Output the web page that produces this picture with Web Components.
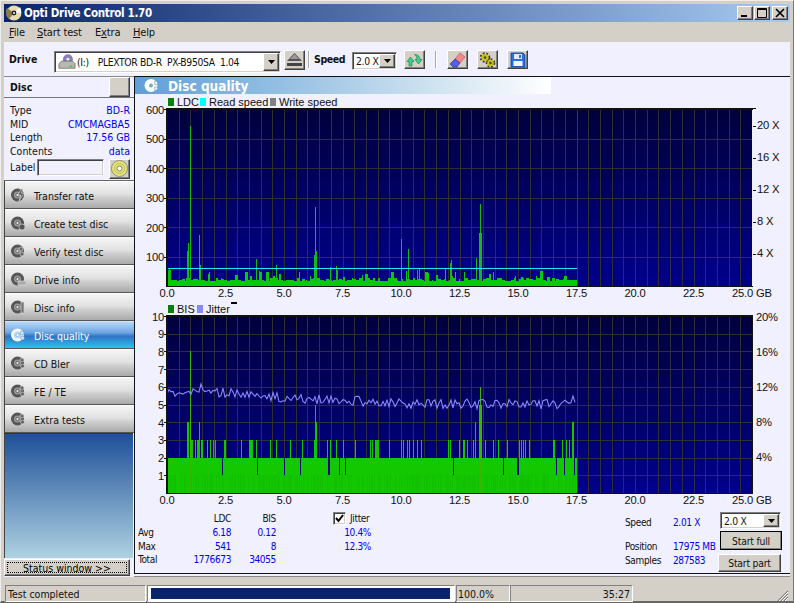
<!DOCTYPE html>
<html><head><meta charset="utf-8"><title>Opti Drive Control</title>
<style>
html,body{margin:0;padding:0;width:794px;height:603px;overflow:hidden;background:#d4d0c8}
body{font-family:"DejaVu Sans",sans-serif;font-stretch:condensed;font-size:10.5px;color:#000}
</style></head><body>
<odc-window>
  <odc-titlebar>Opti Drive Control 1.70</odc-titlebar>
  <odc-menubar></odc-menubar>
  <odc-toolbar></odc-toolbar>
  <odc-workspace>
    <odc-sidebar slot="side"></odc-sidebar>
    <odc-main slot="main"></odc-main>
  </odc-workspace>
  <odc-statusbar></odc-statusbar>
</odc-window>
<script>
const UI='"DejaVu Sans",sans-serif';
const BEVEL='border:1px solid;border-color:#fff #404040 #404040 #fff;box-shadow:inset -1px -1px 0 #808080;background:#d4d0c8;box-sizing:border-box;';
const SUNK='border:1px solid;border-color:#808080 #fff #fff #808080;box-shadow:inset 1px 1px 0 #404040,inset -1px -1px 0 #d4d0c8;box-sizing:border-box;';
function comp(name,css,html,init){
  class C extends HTMLElement{
    constructor(){super();this.attachShadow({mode:'open'}).innerHTML='<style>'+css+'</style>'+html;}
    connectedCallback(){if(init&&!this._i){this._i=1;init.call(this,this.shadowRoot);}}
  }
  customElements.define(name,C);
}
const navDisc=(extra,fg)=>`<svg width="16" height="16" viewBox="0 0 16 16"><circle cx="7.5" cy="8" r="6.5" fill="${fg||'#555'}"/><circle cx="7.5" cy="8" r="3.6" fill="${fg?'#bcd8f4':'#9a9a9a'}"/><circle cx="7.5" cy="8" r="1.6" fill="${fg?'#fff':'#e8e8e8'}" stroke="${fg?'#6aa':'#333'}" stroke-width=".6"/>${extra||''}</svg>`;

comp('odc-window',`:host{display:flex;flex-direction:column;width:794px;height:603px;box-sizing:border-box;background:#d4d0c8;border-top:1px solid #f0eee8;border-bottom:2px solid #666;border-right:1px solid #777;border-left:1px solid #eee;padding:3px 3px 1px}`,`<slot></slot>`);

comp('odc-titlebar',`:host{display:flex;align-items:center;height:18px;flex:none;background:linear-gradient(90deg,#0a246a,#a6caf0);color:#fff;font:bold 11.5px ${UI};font-stretch:condensed;letter-spacing:-.3px;padding-left:2px}
.t{margin-left:2px;white-space:nowrap}.b{margin-left:auto;display:flex;margin-right:2px}
.w{width:16px;height:14px;${BEVEL}display:flex;align-items:center;justify-content:center}.w+.w{margin-left:1px}.w.c{margin-left:2px}`,
`<svg width="16" height="16" viewBox="0 0 16 16"><circle cx="8" cy="8" r="7.5" fill="#e6dcb0"/><path d="M8 8L1 3A8 8 0 0 0 3 14Z" fill="#8a7a50"/><path d="M8 8L14 2A8 8 0 0 1 15 8Z" fill="#fff"/><circle cx="8" cy="8" r="2.4" fill="#222"/><circle cx="8" cy="8" r="1" fill="#fff"/></svg>
<span class="t"><slot></slot></span>
<span class="b"><span class="w"><svg width="10" height="10"><rect x="1" y="7" width="6" height="2"/></svg></span><span class="w"><svg width="12" height="10"><path d="M1.5 .5h9v9h-9z M1 1.5h10" fill="none" stroke="#000"/></svg></span><span class="w c"><svg width="10" height="10"><path d="M1 1L9 9M9 1L1 9" stroke="#000" stroke-width="1.7"/></svg></span></span>`);

comp('odc-menubar',`:host{display:flex;height:20px;flex:none;align-items:center;font:11px ${UI};font-stretch:condensed;letter-spacing:-.15px;padding-left:5px;background:#d4d0c8;color:#111}
span{display:block}u{text-decoration:underline}`,
`<span style="width:28px"><u>F</u>ile</span><span style="width:58px"><u>S</u>tart test</span><span style="width:38px">E<u>x</u>tra</span><span><u>H</u>elp</span>`);

comp('odc-combo',`:host{display:flex;align-items:center;box-sizing:border-box;${SUNK}background:#fff;height:var(--h,18px);font:10.3px ${UI};font-stretch:condensed;letter-spacing:var(--ls,-.27px);color:#111;overflow:hidden;position:relative;padding-left:3px;white-space:nowrap}
.a{margin-left:auto;width:16px;height:calc(100% - 2px);margin-right:1px;${BEVEL}display:flex;align-items:center;justify-content:center;flex:none}`,
`<slot></slot><span class="a"><svg width="7" height="4"><path d="M0 0h7L3.500 4z"/></svg></span>`);

comp('odc-toolbtn',`:host{display:flex;align-items:center;justify-content:center;width:21px;height:19px;flex:none;${BEVEL}}`,`<slot></slot>`);

comp('odc-btn',`:host{display:flex;align-items:center;justify-content:center;${BEVEL}font:10.3px ${UI};font-stretch:condensed;letter-spacing:-.2px;color:#111;flex:none}`,`<slot></slot>`);

comp('odc-toolbar',`:host{display:flex;align-items:flex-start;height:34px;flex:none;background:#f0f0ff;box-sizing:border-box;padding-left:5px;position:relative}
b{font:bold 10.5px ${UI};font-stretch:condensed;color:#111}
.sep{width:1px;height:17px;background:#aaa;margin-top:9px;border-right:1px solid #fff;flex:none}
.d{margin-top:11px}
odc-combo{margin-top:9px}odc-toolbtn{margin-top:8px}
svg{display:block}`,
`<b class="d" style="width:45px">Drive</b>
<odc-combo style="width:227px;--h:22px;--ls:-.35px"><svg width="18" height="18" viewBox="0 0 20 18" style="margin-right:1px;flex:none"><circle cx="11" cy="6" r="5.5" fill="#8a7fb8"/><circle cx="11" cy="6" r="1.700" fill="#eee"/><path d="M1 11l3-3h12l3 3v5H1z" fill="#b8b8b0" stroke="#555" stroke-width=".7"/><rect x="13" y="13" width="3" height="1.500" fill="#3c3"/></svg><span style="margin-right:9px">(I:)</span><span>PLEXTOR BD-R&nbsp; PX-B950SA&nbsp; 1.04</span></odc-combo>
<odc-toolbtn style="margin-left:3px;width:21px;height:20px"><svg width="17" height="14" viewBox="0 0 17 14"><path d="M8.500 0L16 8H1z" fill="#555"/><path d="M8.500 1L4 6h9z" fill="#999"/><rect x="1" y="10" width="15" height="3" fill="#444"/></svg></odc-toolbtn>
<span class="sep" style="margin-left:3px;margin-right:4px"></span>
<b class="d" style="width:38px;letter-spacing:-.4px">Speed</b>
<odc-combo style="width:45px;--h:18px;margin-top:10px">2.0 X</odc-combo>
<odc-toolbtn style="margin-left:7px"><svg width="17" height="16" viewBox="0 0 17 16"><path d="M4.500 5L1 9.500H3V14H6V9.500H8z" fill="#3cd088" stroke="#0d7a48" stroke-width=".6"/><path d="M12.500 12L16 7.500H14C14 4.500 12 2.500 8.500 2.500 10.500 4 11 5.500 11 7.500H9z" fill="#3cd088" stroke="#0d7a48" stroke-width=".6"/></svg></odc-toolbtn>
<span class="sep" style="margin-left:10px;margin-right:10px"></span>
<odc-toolbtn><svg width="17" height="16" viewBox="0 0 17 16"><path d="M11 1l5 4-5 6-5-4z" fill="#f08a8a" stroke="#b44" stroke-width=".6"/><path d="M6 7l5 4-3 4H4l-3-3z" fill="#5560e8" stroke="#228" stroke-width=".6"/></svg></odc-toolbtn>
<odc-toolbtn style="margin-left:9px"><svg width="17" height="16" viewBox="0 0 17 16"><g fill="none" stroke="#3a3a10" stroke-width="2" stroke-dasharray="1.800 1.700"><circle cx="6" cy="5.500" r="4.300"/><circle cx="11.500" cy="11" r="3.800"/></g><circle cx="6" cy="5.500" r="3.600" fill="#c8c018"/><circle cx="11.500" cy="11" r="3.200" fill="#c8c018"/><circle cx="6" cy="5.500" r="1.200" fill="#444"/><circle cx="11.500" cy="11" r="1.200" fill="#444"/></svg></odc-toolbtn>
<odc-toolbtn style="margin-left:9px"><svg width="16" height="16" viewBox="0 0 16 16"><path d="M1 1h12l2 2v12H1z" fill="#2a6fe0" stroke="#0a3a9a" stroke-width=".8"/><rect x="4" y="2" width="8" height="5" fill="#dfe8f8"/><rect x="9" y="3" width="2" height="3" fill="#2a6fe0"/><rect x="3.500" y="9" width="9" height="5" fill="#f4f4f4"/></svg></odc-toolbtn>`);

comp('odc-workspace',`:host{display:flex;flex:none;height:501px;background:#f0f0ff}
.s{width:130px;flex:none;display:block}.m{flex:1;min-width:0;display:block}`,
`<div class="s"><slot name="side"></slot></div><div class="m"><slot name="main"></slot></div>`);

comp('odc-row',`:host{display:flex;justify-content:space-between;height:13.700px;align-items:center;padding:0 0 0 6px;color:#111;font-size:10.5px}::slotted([slot=v]){color:#0000f0}`,`<slot></slot><slot name="v"></slot>`);

comp('odc-nav',`:host{display:flex;align-items:center;height:28px;box-sizing:border-box;border-bottom:1px solid #555;border-top:1px solid #fff;background:linear-gradient(#f4f4f4 0,#e2e2e2 45%,#cfcfcf 60%,#a9a9a9 100%);font:10.5px ${UI};font-stretch:condensed;color:#111;padding:1px 0 0 5px}
:host([active]){background:linear-gradient(#b6d8f8 0,#6fa8e4 40%,#2f74c4 55%,#2cc4f0 100%);color:#fff;border-top-color:#d0e8ff}
.i{width:24px;display:flex;height:16px;margin-top:-1px}`,`<span class="i"><slot name="i"></slot></span><slot></slot>`);

comp('odc-sidebar',`:host{display:flex;flex-direction:column;height:501px;box-sizing:border-box;border-top:1px solid #888}
.h{display:flex;align-items:center;height:21px;flex:none;box-sizing:border-box;border-bottom:1px solid #777;padding-left:6px;font:bold 10.5px ${UI};font-stretch:condensed;color:#111}
.sq{margin-left:auto;margin-right:4px;width:21px;height:20px;${BEVEL}}
.info{height:83px;flex:none;box-sizing:border-box;padding:5px 4px 0 0;border-bottom:1px solid #666}
.lab{display:flex;align-items:flex-start;padding-left:6px;height:20px;color:#111;margin-top:1px;line-height:16px}
.in{width:67px;height:17px;${SUNK}margin-left:auto;background:#f0f0ff}
.dbtn{width:21px;height:20px;${BEVEL}margin-left:5px;display:flex;align-items:center;justify-content:center}
.nav{display:block;flex:none;border-left:1px solid #444;width:129px}
.sky{height:124px;flex:none;width:128px;border-left:1px solid #444;border-top:1px solid #333;background:linear-gradient(#1f5099,#aed2e2)}
.st{margin-top:1px;width:126px;height:17px;display:flex;${BEVEL}position:relative;align-items:center;justify-content:center}
.st:after{content:"";position:absolute;inset:2px;border:1px dotted #000}`,
`<div class="h">Disc<span class="sq"></span></div>
<div class="info">
 <odc-row>Type<span slot="v">BD-R</span></odc-row>
 <odc-row>MID<span slot="v">CMCMAGBA5</span></odc-row>
 <odc-row>Length<span slot="v">17.56 GB</span></odc-row>
 <odc-row>Contents<span slot="v">data</span></odc-row>
 <div class="lab">Label<span class="in"></span><span class="dbtn"><svg width="17" height="17" viewBox="0 0 17 17"><circle cx="8.500" cy="8.500" r="8" fill="#e6e67a" stroke="#777" stroke-width=".8"/><circle cx="8.500" cy="8.500" r="5" fill="none" stroke="#b8b850"/><circle cx="8.500" cy="8.500" r="2.500" fill="#fff" stroke="#666" stroke-width=".8"/></svg></span></div>
</div>
<div class="nav">
 <odc-nav><span slot="i">${navDisc('<path d="M11 2l-3 6h3l-2 6 5-8h-3l2-4z" fill="#555" stroke="#eee" stroke-width=".6"/>')}</span>Transfer rate</odc-nav>
 <odc-nav><span slot="i">${navDisc('<circle cx="12" cy="12" r="3" fill="#555" stroke="#ddd" stroke-width=".6"/>')}</span>Create test disc</odc-nav>
 <odc-nav><span slot="i">${navDisc('<circle cx="11" cy="6" r="2" fill="#666" stroke="#ddd" stroke-width=".6"/><circle cx="12" cy="11" r="2" fill="#666" stroke="#ddd" stroke-width=".6"/>')}</span>Verify test disc</odc-nav>
 <odc-nav><span slot="i">${navDisc('<rect x="8" y="10" width="8" height="4" fill="#aaa" stroke="#ddd" stroke-width=".6"/>')}</span>Drive info</odc-nav>
 <odc-nav><span slot="i">${navDisc('<rect x="11" y="3" width="3" height="11" fill="#777" stroke="#ddd" stroke-width=".6"/>')}</span>Disc info</odc-nav>
 <odc-nav active><span slot="i">${navDisc('<circle cx="12" cy="6" r="2" fill="#cfe4fa" stroke="#68a" stroke-width=".5"/><circle cx="12.500" cy="11" r="2" fill="#cfe4fa" stroke="#68a" stroke-width=".5"/>','#f4f8ff')}</span>Disc quality</odc-nav>
 <odc-nav><span slot="i">${navDisc('<circle cx="12" cy="5" r="2" fill="#666" stroke="#ddd" stroke-width=".6"/><circle cx="12.500" cy="11" r="2" fill="#666" stroke="#ddd" stroke-width=".6"/>')}</span>CD Bler</odc-nav>
 <odc-nav><span slot="i">${navDisc('<circle cx="12" cy="5" r="2" fill="#666" stroke="#ddd" stroke-width=".6"/><circle cx="12.500" cy="11" r="2" fill="#666" stroke="#ddd" stroke-width=".6"/>')}</span>FE / TE</odc-nav>
 <odc-nav><span slot="i">${navDisc('<circle cx="12" cy="5" r="2" fill="#666" stroke="#ddd" stroke-width=".6"/><circle cx="12.500" cy="11" r="2" fill="#666" stroke="#ddd" stroke-width=".6"/>')}</span>Extra tests</odc-nav>
</div>
<div class="sky"></div>
<div class="st">Status window &gt;&gt;</div>`);

comp('odc-banner',`:host{display:flex;align-items:center;height:17px;width:416px;flex:none;background:linear-gradient(90deg,#5f9fd8,#9cc4e4 40%,#d4e6f2 75%,#fff);color:#fff;font:bold 13.5px ${UI};font-stretch:condensed}
.i{width:33px;display:flex;justify-content:center}`,
`<span class="i"><svg width="15" height="15" viewBox="0 0 15 15"><circle cx="7" cy="7.500" r="6.500" fill="#fff"/><circle cx="7" cy="7.500" r="2" fill="#7ab"/><circle cx="12" cy="5" r="1.800" fill="#e4f0fa" stroke="#68a" stroke-width=".5"/><circle cx="12" cy="10.500" r="1.800" fill="#e4f0fa" stroke="#68a" stroke-width=".5"/></svg></span><slot></slot>`);

comp('odc-legend',`:host{display:flex;align-items:center;box-sizing:border-box;padding-top:2px;height:var(--h,13px);padding-left:33px;font:11px "Liberation Sans",sans-serif;color:#111;white-space:nowrap}
::slotted(i){display:block;width:6px;height:8px;margin-right:3px;flex:none}`,`<slot></slot>`);

function rng(seed){let s=seed;return()=>{s=(s*1664525+1013904223)>>>0;return s/4294967296;};}
comp('odc-chart',`:host{display:block;width:655px;height:var(--ch,192px)}svg{display:block;overflow:visible}text{font:11.2px "Liberation Sans",sans-serif;letter-spacing:-.2px;fill:#111}`,`<svg id="s" width="655" xmlns="http://www.w3.org/2000/svg"></svg>`,function(root){
  const kind=this.getAttribute('kind');
  const svg=root.getElementById('s');
  svg.setAttribute('height',192);svg.setAttribute('shape-rendering','crispEdges');
  const L=32,R=617,T=1,B=178,W=R-L,Ht=B-T;
  const gid='g'+kind;
  const X=g=>L+g/25*W;
  let o=`<defs><linearGradient id="${gid}" x1="0" y1="0" x2="0" y2="1"><stop offset="0" stop-color="#00003c"/><stop offset="1" stop-color="#00008c"/></linearGradient></defs>`;
  o+=`<rect x="${L}" y="${T}" width="${W}" height="${Ht}" fill="url(#${gid})"/>`;
  for(let i=1;i<50;i++){const x=Math.round(X(i*.5));o+=`<rect x="${x}" y="${T}" width="1" height="${Ht}" fill="#303034"/>`;}
  const rows=kind==='ldc'?6:10;
  for(let i=1;i<rows;i++){const y=Math.round(B-i*Ht/rows);o+=`<rect x="${L}" y="${y}" width="${W}" height="1" fill="#303034"/>`;}
  const bar=(px,y0,y1,c)=>`<rect x="${px-135}" y="${y0}" width="1" height="${y1-y0}" fill="${c}"/>`;
  if(kind==='ldc'){
    const vy=v=>Math.round(B-v*Ht/600);
    const r=rng(77);
    for(let px=167;px<578;){
      const n=r();const v=n>.85?25+r()*26:n>.45?19+r()*9:16+r()*5;
      const w=1+Math.floor(r()*3);
      for(let k=0;k<w&&px<578;k++,px++)o+=bar(px,vy(v),B,'#04cc04');
    }
    const sp={168:55,169:58,170:55,187:118,188:145,190:541,199:172,200:70,256:90,276:70,314:105,315:268,316:118,330:65,336:67,337:55,401:160,408:126,417:55,419:60,445:60,450:78,451:88,476:95,479:180,480:279,481:180};
    for(const k in sp)o+=bar(+k,vy(sp[k]),B-4,'#10bc10');
    o+=`<rect x="${L}" y="${Math.round(B-60*Ht/600)}" width="${577-167}" height="1" fill="#20e8f0"/>`;
    o+=`<rect x="${577-135}" y="${T}" width="1" height="${Ht}" fill="#4c2470"/>`;
  }else{
    const vy=v=>Math.round(B-v*Ht/10);
    const r=rng(123);
    for(let px=167;px<578;px++){
      o+=bar(px,vy(1),B,r()>.5?'#14c800':'#12c002');
    }
    o+=`<rect x="${L}" y="${vy(2)}" width="${578-167}" height="${vy(1)-vy(2)}" fill="#14c800"/>`;
    const notch=[222,257,284,300,328,329,339,345,453,503,517,518,556,564,574];
    for(const n of notch)o+=bar(n,vy(2),vy(1),'#0a0a80');
    const t3=[167,168,172,181,187,188,197,200,201,217,226,235,241,268,269,270,319,343,344,349,350,364,406,424,466,502,538,541,577,586,604,625,661,706,712,721,724,725,727,730,763];
    const t3b=[401,403,407,409,413,417,421,448,450,459,463,464,467,473,485,493,498,507,519,521,523,525,529,553,554,562,566,569];
    const zz=[...t3.map(z=>135+z/3),...t3b];
    const seen=new Set();
    for(const z of zz){const p=Math.round(z);if(!seen.has(p)&&p<578){seen.add(p);o+=bar(p,vy(3),vy(2),'#14c400');}}
    o+=bar(187,vy(4),vy(2),'#14c400')+bar(188,vy(4),vy(2),'#14c400')+bar(199,vy(4),vy(2),'#14c400')+bar(475,vy(4),vy(2),'#14c400');
    o+=bar(572,vy(4),vy(2),'#14c400')+bar(573,vy(4),vy(2),'#14c400');
    o+=bar(315,vy(5),vy(2),'#14c400')+bar(316,vy(4),vy(2),'#14c400');
    o+=bar(190,vy(8),B,'#3cb400');
    o+=bar(479,vy(5),B,'#3cb400')+bar(480,vy(6),B,'#3cb400')+bar(481,vy(5),B,'#3cb400');
    o+=`<rect x="${577-135}" y="${T}" width="1" height="${Ht}" fill="#4c2470"/>`;
    const rj=rng(991);const anchors=[[167,393],[210,392],[260,396],[300,399],[380,402],[400,404],[575,404]];
    let pts=[];
    const my=x=>{for(let i=1;i<anchors.length;i++){if(x<=anchors[i][0]){const a=anchors[i-1],b=anchors[i];return a[1]+(b[1]-a[1])*(x-a[0])/(b[0]-a[0]);}}return 404;};
    for(let x=167;x<=576;x+=2){let y=my(x)+(rj()-.5)*10;if(x===201)y=384;if(x===573)y=396;pts.push((x-135)+','+(y-315).toFixed(1));}
    o+=`<polyline points="${pts.join(' ')}" fill="none" stroke="#8c8cff" stroke-width="1.050" shape-rendering="auto"/>`;
  }
  o+=`<rect x="${L-1}" y="${T-1}" width="${W+2}" height="1.500" fill="#111"/><rect x="${L-1}" y="${T-1}" width="1.500" height="${Ht+2}" fill="#111"/><rect x="${L-1}" y="${B}" width="${W+2}" height="1" fill="#111"/>`;
  if(kind!=='ldc')o+=`<rect x="${R}" y="${T-1}" width="1" height="${Ht+2}" fill="#111"/>`;
  else o+=`<rect x="${R}" y="0" width="4" height="1" fill="#111"/>`;
  const tx=(x,y,s,a)=>`<text x="${x}" y="${y}" text-anchor="${a||'start'}">${s}</text>`;
  for(let i=1;i<=rows;i++){
    const y=B-i*Ht/rows;
    o+=tx(L-3,y+4.5,kind==='ldc'?i*100:i,'end');
    o+=`<rect x="${L-3}" y="${Math.round(y)}" width="2" height="1" fill="#111"/>`;
  }
  if(kind==='ldc'){[[20,17],[16,49],[12,81],[8,113],[4,145]].forEach(a=>o+=tx(622,a[1]+4,a[0]+' X'));
    for(let i=1;i<=5;i++)o+=`<rect x="${R+1}" y="${Math.round(B-i*32)}" width="3" height="1" fill="#111"/>`;}
  else{[[20,1],[16,36],[12,71],[8,106],[4,141]].forEach(a=>o+=tx(621,a[1]+4.5,a[0]+'%'));}
  for(let i=0;i<=10;i++){const g=i*2.5;const s=g.toFixed(1);o+=tx(i===10?R-20:X(g),B+11,i===10?s+' GB':s,i===10?'start':'middle');}
  svg.innerHTML=o;
});

comp('odc-stats',`:host{display:flex;height:65px;box-sizing:border-box;font-size:10px;letter-spacing:-.35px;color:#111}
.g{display:grid;grid-template-columns:52px 41px 45px 57px 38px;grid-auto-rows:13.700px;padding:5px 0 0 3px;width:490px;box-sizing:border-box;align-items:center}
.v{color:#0000f0;text-align:right}.h{text-align:right}
.j{display:flex;align-items:center}
.c{width:13px;height:13px;${SUNK}background:#fff;margin-right:4px;display:flex;align-items:center;justify-content:center;flex:none}
.r{display:grid;grid-template-columns:48px 47px;grid-template-rows:14px 10px 14px 14px;align-items:center;padding-top:8px;box-sizing:border-box}
.b{display:flex;flex-direction:column;width:62px;padding-top:5px}`,
`<div class="g">
 <span></span><span class="h">LDC</span><span class="h">BIS</span><span></span><span class="j"><span class="c"><svg width="9" height="9"><path d="M1 4l2.500 3L8 1" fill="none" stroke="#000" stroke-width="2"/></svg></span>Jitter</span>
 <span>Avg</span><span class="v">6.18</span><span class="v">0.12</span><span></span><span class="v">10.4%</span>
 <span>Max</span><span class="v">541</span><span class="v">8</span><span></span><span class="v">12.3%</span>
 <span>Total</span><span class="v">1776673</span><span class="v">34055</span><span></span><span></span>
</div>
<div class="r">
 <span>Speed</span><span style="color:#0000f0">2.01 X</span><span style="grid-column:1/3"></span>
 <span>Position</span><span style="color:#0000f0;white-space:nowrap">17975 MB</span>
 <span>Samples</span><span style="color:#0000f0">287583</span>
</div>
<div class="b">
 <odc-combo style="width:61px;--h:17px">2.0 X</odc-combo>
 <odc-btn style="width:62px;height:19px;margin-top:2px;outline:1px solid #000;outline-offset:-1px">Start full</odc-btn>
 <odc-btn style="width:63px;height:18px;margin-top:4px;margin-left:-2px">Start part</odc-btn>
</div>`);

comp('odc-main',`:host{display:block;height:498px;box-sizing:border-box;border-left:1px solid #111;border-top:1px solid #111;border-bottom:1px solid #111;position:relative;box-shadow:0 2px 0 #f0f0ff,0 3px 0 #888}
.dash{position:absolute;left:96px;top:225px;width:6px;height:2px;background:#000}`,
`<odc-banner>Disc quality</odc-banner>
<odc-legend style="--h:14px"><i style="background:#0a800a"></i><span style="width:23px">LDC</span><i style="background:#00ffff"></i><span style="width:61px">Read speed</span><i style="background:#808080"></i><span>Write speed</span></odc-legend>
<odc-chart kind="ldc"></odc-chart>
<odc-legend style="--h:15px"><i style="background:#0a800a"></i><span style="width:20px">BIS</span><i style="background:#8888ff"></i><span>Jitter</span></odc-legend>
<span class="dash"></span>
<odc-chart kind="bis"></odc-chart>
<odc-stats></odc-stats>`);

comp('odc-statusbar',`:host{display:flex;height:17px;flex:none;margin-top:8px;box-sizing:border-box;font:10.5px ${UI};font-stretch:condensed;color:#111;align-items:stretch;padding-left:1px}
.p{border:1px solid;border-color:#808080 #fff #fff #808080;box-sizing:border-box;display:flex;align-items:center;padding:0 2px;flex:none}
.bar{margin:0 1px;background:#fff;padding:0}
.fill{height:11px;width:299px;background:#0a246a;margin-left:3px;outline:1px solid #fff}
.grip{margin-left:auto;width:13px;height:13px;align-self:flex-end;margin-right:1px}`,
`<span class="p" style="width:141px">Test completed</span>
<span class="p bar" style="width:308px"><span class="fill"></span></span>
<span class="p" style="width:54px;padding-left:1px">100.0%</span>
<span class="p" style="width:123px;justify-content:flex-end">35:27</span>
<svg class="grip" viewBox="0 0 13 13"><path d="M12 2L2 12M12 5L5 12M12 8L8 12" stroke="#808080" stroke-width="1.200"/><path d="M12 3L3 12M12 6L6 12M12 9L9 12" stroke="#fff"/></svg>`);
</script>
</body></html>
